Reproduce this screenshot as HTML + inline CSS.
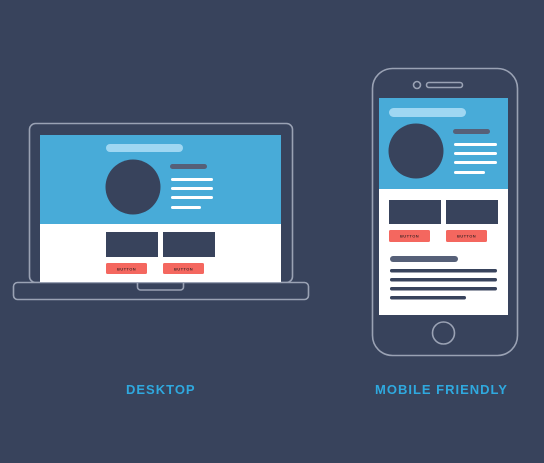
<!DOCTYPE html>
<html><head><style>
body{margin:0;width:544px;height:463px;background:#38435c;overflow:hidden}
.t{position:absolute;font-family:"Liberation Sans",sans-serif;font-weight:bold;color:#2fa9df;font-size:13px;letter-spacing:1px;top:382px;line-height:16px;white-space:nowrap}
</style></head><body>
<svg width="544" height="463" style="position:absolute;left:0;top:0">
<g fill="none" stroke="#9aa2b4" stroke-width="1.6">
<rect x="29.5" y="123.5" width="263" height="159" rx="6"/>
<rect x="13.5" y="282.5" width="295" height="17" rx="4" fill="#38435c"/>
<path d="M137.5 283v4a3 3 0 0 0 3 3h40a3 3 0 0 0 3-3v-4"/>
<rect x="372.5" y="68.5" width="145" height="287" rx="20"/>
<circle cx="417" cy="85" r="3.5"/>
<rect x="426.5" y="82.5" width="36" height="5" rx="2.5"/>
<circle cx="443.5" cy="333" r="11"/>
</g>
<rect x="40" y="135" width="241" height="147" fill="#fff"/>
<rect x="40" y="135" width="241" height="89" fill="#48abd8"/>
<rect x="106" y="144" width="77" height="8" rx="4" fill="#9fd7f2"/>
<circle cx="133" cy="187" r="27.5" fill="#38435c"/>
<rect x="170" y="164" width="37" height="5" rx="2.5" fill="#566078"/>
<g fill="#fff"><rect x="171" y="178" width="42" height="3" rx="1.5"/><rect x="171" y="187" width="42" height="3" rx="1.5"/><rect x="171" y="196" width="42" height="3" rx="1.5"/><rect x="171" y="206" width="30" height="3" rx="1.5"/></g>
<g fill="#38435c"><rect x="106" y="232" width="52" height="25"/><rect x="163" y="232" width="52" height="25"/></g>
<g fill="#f4675f"><rect x="106" y="263" width="41" height="11" rx="1.5"/><rect x="163" y="263" width="41" height="11" rx="1.5"/></g>
<rect x="379" y="98" width="129" height="217" fill="#fff"/>
<rect x="379" y="98" width="129" height="91" fill="#48abd8"/>
<rect x="389" y="108" width="77" height="9" rx="4.5" fill="#9fd7f2"/>
<circle cx="416" cy="151" r="27.5" fill="#38435c"/>
<rect x="453" y="129" width="37" height="5" rx="2.5" fill="#566078"/>
<g fill="#fff"><rect x="454" y="143" width="43" height="3" rx="1.5"/><rect x="454" y="152" width="43" height="3" rx="1.5"/><rect x="454" y="161" width="43" height="3" rx="1.5"/><rect x="454" y="171" width="31" height="3" rx="1.5"/></g>
<g fill="#38435c"><rect x="389" y="200" width="52" height="24"/><rect x="446" y="200" width="52" height="24"/></g>
<g fill="#f4675f"><rect x="389" y="230" width="41" height="12" rx="1.5"/><rect x="446" y="230" width="41" height="12" rx="1.5"/></g>
<g font-family="Liberation Sans,sans-serif" font-size="4" font-weight="bold" fill="#4a2a2a" text-anchor="middle" letter-spacing=".4"><text x="126.5" y="270.5">BUTTON</text><text x="183.5" y="270.5">BUTTON</text><text x="409.5" y="237.5">BUTTON</text><text x="466.5" y="237.5">BUTTON</text></g>
<rect x="390" y="256" width="68" height="6" rx="3" fill="#566078"/>
<g fill="#38435c"><rect x="390" y="269" width="107" height="3.5" rx="1.7"/><rect x="390" y="278" width="107" height="3.5" rx="1.7"/><rect x="390" y="287" width="107" height="3.5" rx="1.7"/><rect x="390" y="296" width="76" height="3.5" rx="1.7"/></g>
</svg>
<div class="t" style="left:126px">DESKTOP</div>
<div class="t" style="left:375px">MOBILE FRIENDLY</div>
</body></html>
